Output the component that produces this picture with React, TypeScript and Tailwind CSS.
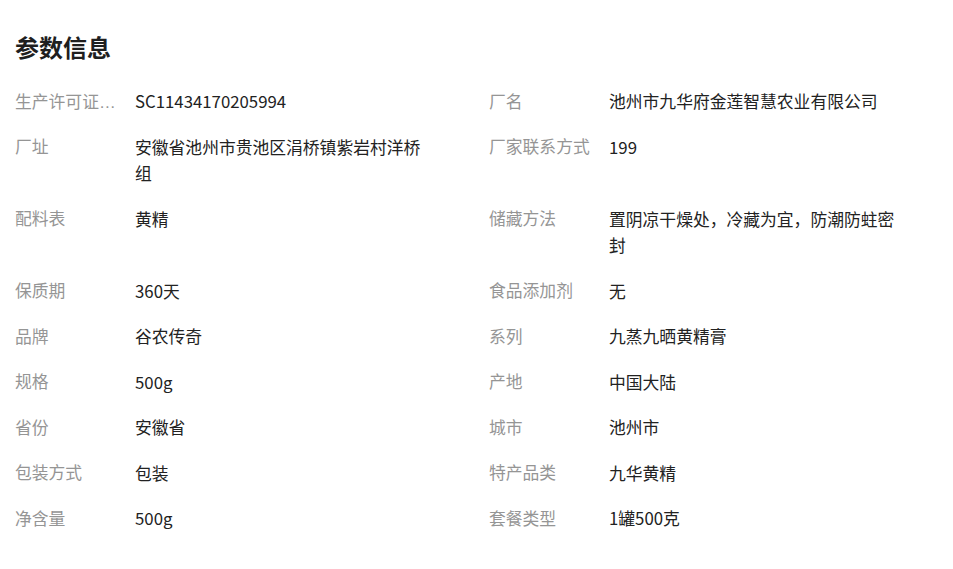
import React from "react";

type Param = { label: string; value: string };

const params: Param[] = [
  { label: "生产许可证编号", value: "SC11434170205994" },
  { label: "厂名", value: "池州市九华府金莲智慧农业有限公司" },
  { label: "厂址", value: "安徽省池州市贵池区涓桥镇紫岩村洋桥组" },
  { label: "厂家联系方式", value: "199" },
  { label: "配料表", value: "黄精" },
  { label: "储藏方法", value: "置阴凉干燥处，冷藏为宜，防潮防蛀密封" },
  { label: "保质期", value: "360天" },
  { label: "食品添加剂", value: "无" },
  { label: "品牌", value: "谷农传奇" },
  { label: "系列", value: "九蒸九晒黄精膏" },
  { label: "规格", value: "500g" },
  { label: "产地", value: "中国大陆" },
  { label: "省份", value: "安徽省" },
  { label: "城市", value: "池州市" },
  { label: "包装方式", value: "包装" },
  { label: "特产品类", value: "九华黄精" },
  { label: "净含量", value: "500g" },
  { label: "套餐类型", value: "1罐500克" },
];

export default function App() {
  return (
    <div
      className="min-h-[569px] w-[953px] bg-white pl-[15px] pt-[32px]"
      style={{ fontFamily: '"Noto Sans CJK SC", "Noto Sans", sans-serif' }}
    >
      <h2 className="text-[24px] font-bold leading-[30px] text-[#1f1f1f]">参数信息</h2>

      <div className="mt-[26px] grid grid-cols-[474px_474px]">
        {params.map((p) => (
          <div key={p.label} className="flex items-start pb-[19px] text-[16.8px] leading-[26.5px]">
            {/* label uses Liberation Sans first so the truncation ellipsis renders as low dots */}
            <div className="mr-[14px] h-[26.5px] w-[106px] shrink-0 truncate pt-[1.5px] font-['Liberation_Sans','Noto_Sans_CJK_SC',sans-serif] text-[#959595]">
              {p.label}
            </div>
            <div className="w-[292px] text-[#222]">{p.value}</div>
          </div>
        ))}
      </div>
    </div>
  );
}
